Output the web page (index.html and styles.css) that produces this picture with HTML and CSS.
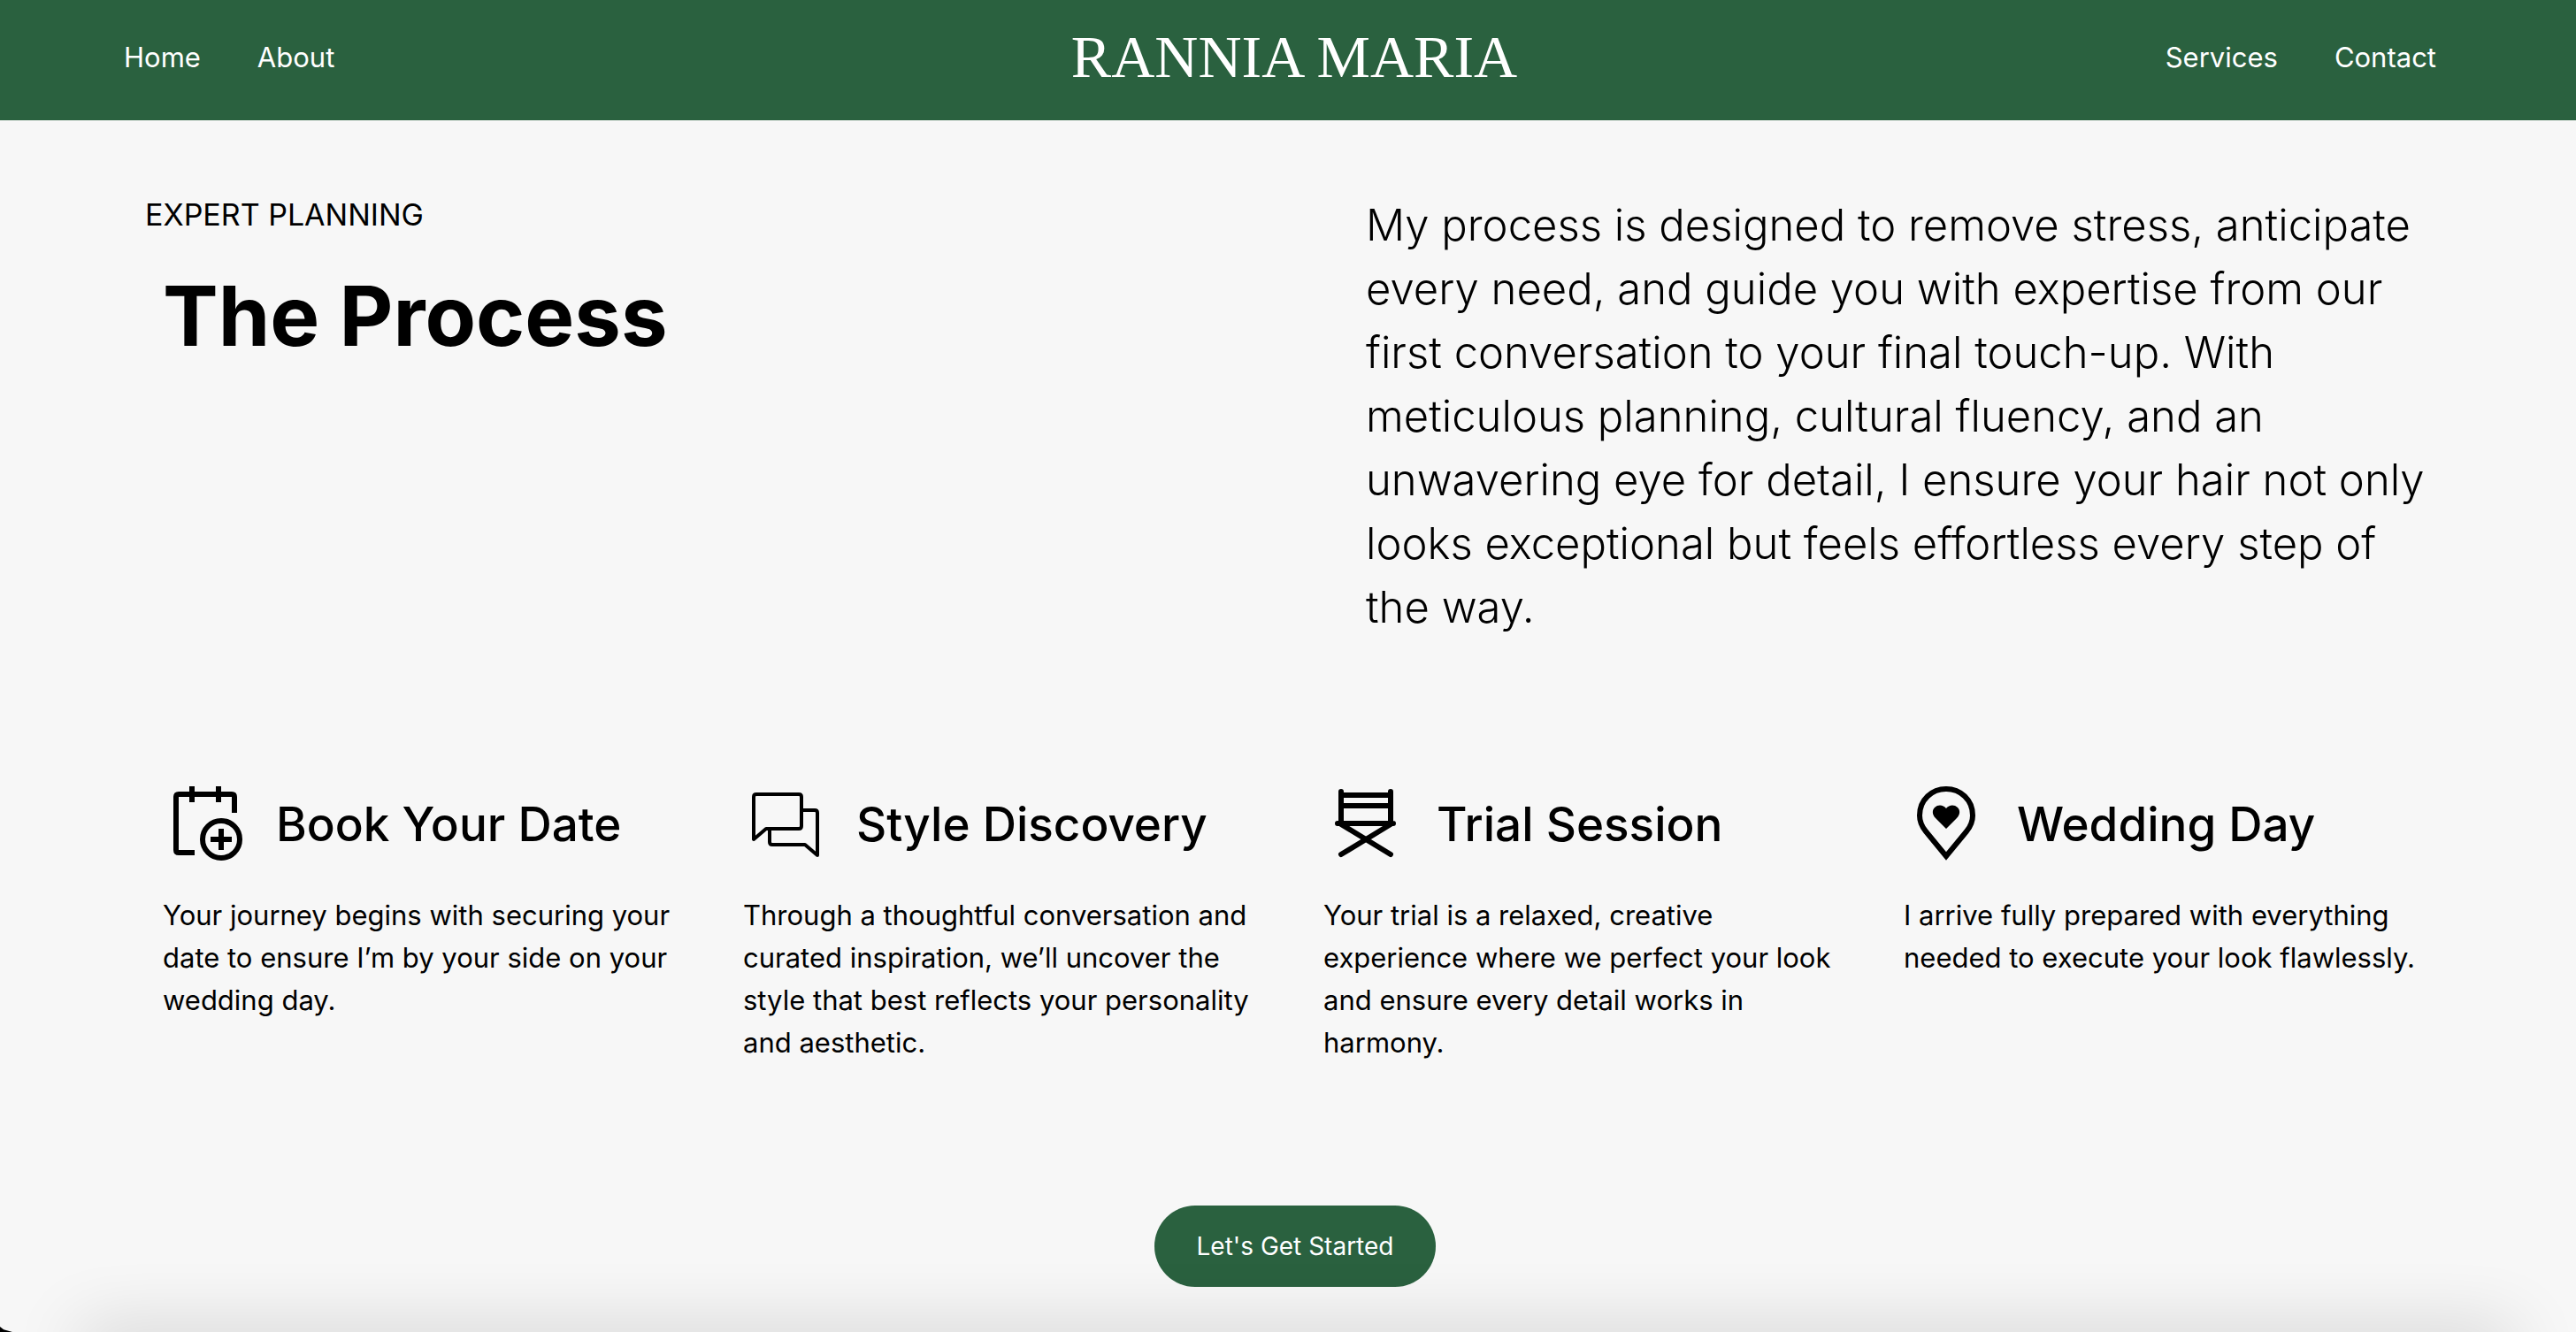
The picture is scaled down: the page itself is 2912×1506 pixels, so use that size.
FILE: index.html
```
<!DOCTYPE html>
<html lang="en">
<head>
    <meta charset="UTF-8">
    <meta name="viewport" content="width=device-width, initial-scale=1.0">
    <title>Rannia Maria</title>
    <link rel="stylesheet" href="styles.css">
</head>
<body>
    <header class="header">
        <nav class="nav">
            <a href="#">Home</a>
            <a href="#">About</a>
        </nav>
        <a class="logo" href="#">RANNIA MARIA</a>
        <nav class="nav nav-right">
            <a href="#">Services</a>
            <a href="#">Contact</a>
        </nav>
    </header>

    <main class="process">
        <section class="intro">
            <div class="intro-title">
                <p class="eyebrow">EXPERT PLANNING</p>
                <h1>The Process</h1>
            </div>
            <p class="intro-text">My process is designed to remove stress, anticipate every need, and guide you with expertise from our first conversation to your final touch-up. With meticulous planning, cultural fluency, and an unwavering eye for detail, I ensure your hair not only looks exceptional but feels effortless every step of the way.</p>
        </section>

        <section class="steps">
            <article class="step">
                <div class="step-head">
                    <svg class="icon" viewBox="0 0 96 96" fill="none" stroke="#000" stroke-width="6">
                        <path d="M36 80H18Q15 80 15 77V17Q15 14 18 14H78Q81 14 81 17V35"/>
                        <path d="M33 5V23M63 5V23"/>
                        <circle cx="66" cy="65" r="21"/>
                        <path d="M54 65H78M66 53V77"/>
                    </svg>
                    <h2>Book Your Date</h2>
                </div>
                <p>Your journey begins with securing your date to ensure I’m by your side on your wedding day.</p>
            </article>

            <article class="step">
                <div class="step-head">
                    <svg class="icon" viewBox="0 0 96 96" fill="none" stroke="#000" stroke-width="4" stroke-linejoin="round">
                        <path d="M12 65V17Q12 14 15 14H63Q66 14 66 17V50Q66 53 63 53H26Z"/>
                        <path d="M66 32H81Q84 32 84 35V83L70 71H33Q30 71 30 68V53"/>
                    </svg>
                    <h2>Style Discovery</h2>
                </div>
                <p>Through a thoughtful conversation and curated inspiration, we’ll uncover the style that best reflects your personality and aesthetic.</p>
            </article>

            <article class="step">
                <div class="step-head">
                    <svg class="icon" viewBox="0 0 96 96" fill="none" stroke="#000" stroke-width="6" stroke-linecap="round">
                        <path d="M20 11V47M76 11V47M20 15H76M20 27H76M16 47H79"/>
                        <path d="M20 48L76 82M76 48L20 82"/>
                    </svg>
                    <h2>Trial Session</h2>
                </div>
                <p>Your trial is a relaxed, creative experience where we perfect your look and ensure every detail works in harmony.</p>
            </article>

            <article class="step">
                <div class="step-head">
                    <svg class="icon" viewBox="0 0 96 96" fill="none" stroke="#000" stroke-width="6">
                        <path d="M48 84L25 56C20 50 18 44 18 38C18 20 32 8 48 8S78 20 78 38C78 44 76 50 71 56Z"/>
                        <path d="M48 53L36 41C32 37 32 32 35 29C39 25 45 26 48 30C51 26 57 25 61 29C64 32 64 37 60 41Z" fill="#000" stroke="none"/>
                    </svg>
                    <h2>Wedding Day</h2>
                </div>
                <p>I arrive fully prepared with everything needed to execute your look flawlessly.</p>
            </article>
        </section>

        <button class="cta" type="button">Let's Get Started</button>
    </main>

    <div class="bottom-shadow"></div>
    <div class="corner"></div>
</body>
</html>
```

FILE: styles.css
```
* {
    box-sizing: border-box;
    margin: 0;
    padding: 0;
}

body {
    position: relative;
    min-height: 100vh;
    overflow: hidden;
    background-color: #f7f7f7;
    color: #000;
    font-family: Inter, "Liberation Sans", sans-serif;
    font-size: 31px;
}

.header {
    display: grid;
    grid-template-columns: 1fr auto 1fr;
    align-items: center;
    padding: 20px 126px 28px 140px;
    background-color: #2a613f;
}

.header a {
    color: #fff;
    text-decoration: none;
}

.nav {
    display: flex;
    gap: 64px;
}

.nav-right {
    justify-content: flex-end;
    padding-right: 32px;
}

.logo {
    font-family: "Liberation Serif", serif;
    font-size: 68px;
    line-height: 88px;
}

.process {
    display: flex;
    flex-direction: column;
    padding: 83px 168px 48px 184px;
}

.intro {
    display: grid;
    grid-template-columns: 1fr 1200px;
}

.intro-title {
    margin-left: -20px;
}

.eyebrow {
    font-size: 34px;
    line-height: 48px;
}

.intro-title h1 {
    margin-top: 30px;
    padding-left: 20px;
    font-size: 94px;
    line-height: 120px;
}

.intro-text {
    font-size: 49px;
    font-weight: 300;
    line-height: 72px;
}

.steps {
    display: grid;
    grid-template-columns: repeat(4, 1fr);
    gap: 64px;
    margin-top: 161px;
}

.step-head {
    display: flex;
    align-items: center;
    gap: 32px;
    margin-bottom: 31px;
}

.icon {
    width: 96px;
    height: 96px;
}

.step h2 {
    font-size: 53px;
    font-weight: 500;
    white-space: nowrap;
}

.step p {
    line-height: 48px;
}

.cta {
    align-self: center;
    margin-top: 160px;
    padding: 0 48px;
    border: none;
    border-radius: 46px;
    background-color: #2a613f;
    color: #fff;
    font-family: inherit;
    font-size: 28px;
    line-height: 92px;
    cursor: pointer;
}

/* soft shade along the bottom edge */
.bottom-shadow {
    position: absolute;
    right: 80px;
    bottom: -20px;
    left: 100px;
    height: 20px;
    box-shadow: 0 10px 80px 10px rgba(0, 0, 0, 0.2);
}

.corner {
    position: absolute;
    bottom: 0;
    left: 0;
    width: 14px;
    height: 6px;
    background: #000;
    clip-path: polygon(0 0, 30% 55%, 100% 100%, 0 100%);
}
```
